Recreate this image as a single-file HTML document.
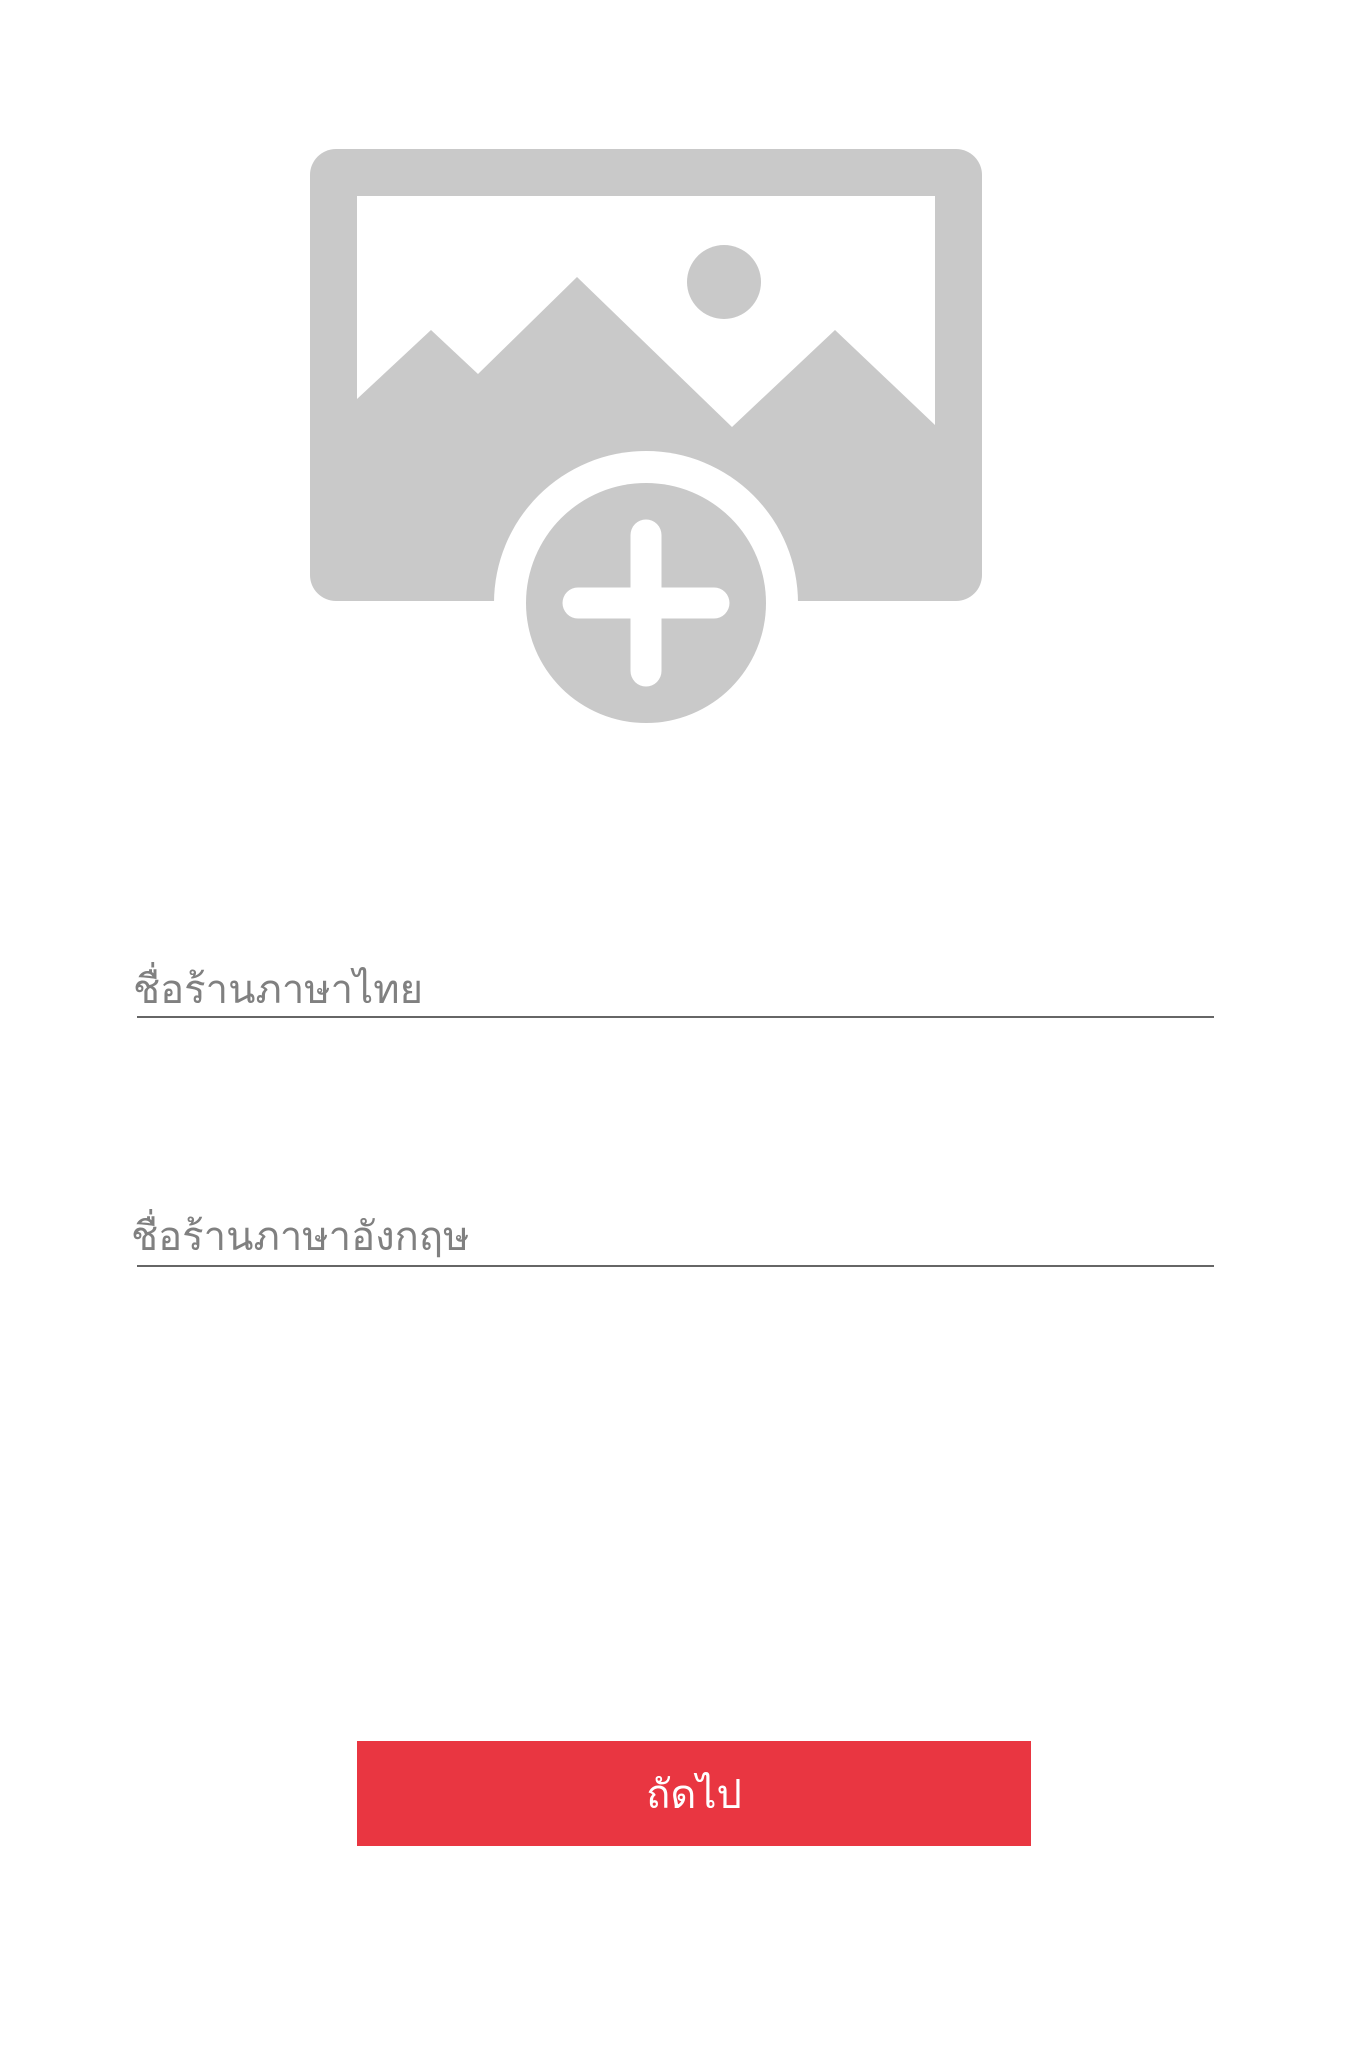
<!DOCTYPE html>
<html><head><meta charset="utf-8"><style>
body{margin:0;width:1365px;height:2048px;background:#fff;position:relative;font-family:"Liberation Sans","DejaVu Sans",sans-serif;overflow:hidden}
.t{position:absolute;color:#808080;font-size:40px;font-weight:300;line-height:1;white-space:nowrap}
.l{position:absolute;left:137px;width:1077px;height:2px;background:#666}
.btn{position:absolute;left:357px;top:1741px;width:674px;height:105px;background:#e93641;color:#fff;font-size:40px;display:flex;align-items:center;justify-content:center}
</style></head><body>
<svg style="position:absolute;left:0;top:0" width="1365" height="800">
<rect x="310" y="149" width="672" height="452" rx="26" fill="#c9c9c9"/>
<rect x="357" y="196" width="578" height="301" fill="#fff"/>
<circle cx="724" cy="282" r="37" fill="#c9c9c9"/>
<polygon points="357,399 431,330 478,374 577,277 732,427 835,330 935,425 935,502 357,502" fill="#c9c9c9"/>
<circle cx="646" cy="603" r="152" fill="#fff"/>
<circle cx="646" cy="603" r="120" fill="#c9c9c9"/>
<line x1="578" y1="603" x2="714" y2="603" stroke="#fff" stroke-width="31" stroke-linecap="round"/>
<line x1="646" y1="535" x2="646" y2="671" stroke="#fff" stroke-width="31" stroke-linecap="round"/>
</svg>
<div class="t" style="left:133px;top:970px">ชื่อร้านภาษาไทย</div>
<div class="l" style="top:1016px"></div>
<div class="t" style="left:131px;top:1217px">ชื่อร้านภาษาอังกฤษ</div>
<div class="l" style="top:1265px"></div>
<div class="btn">ถัดไป</div>
</body></html>
